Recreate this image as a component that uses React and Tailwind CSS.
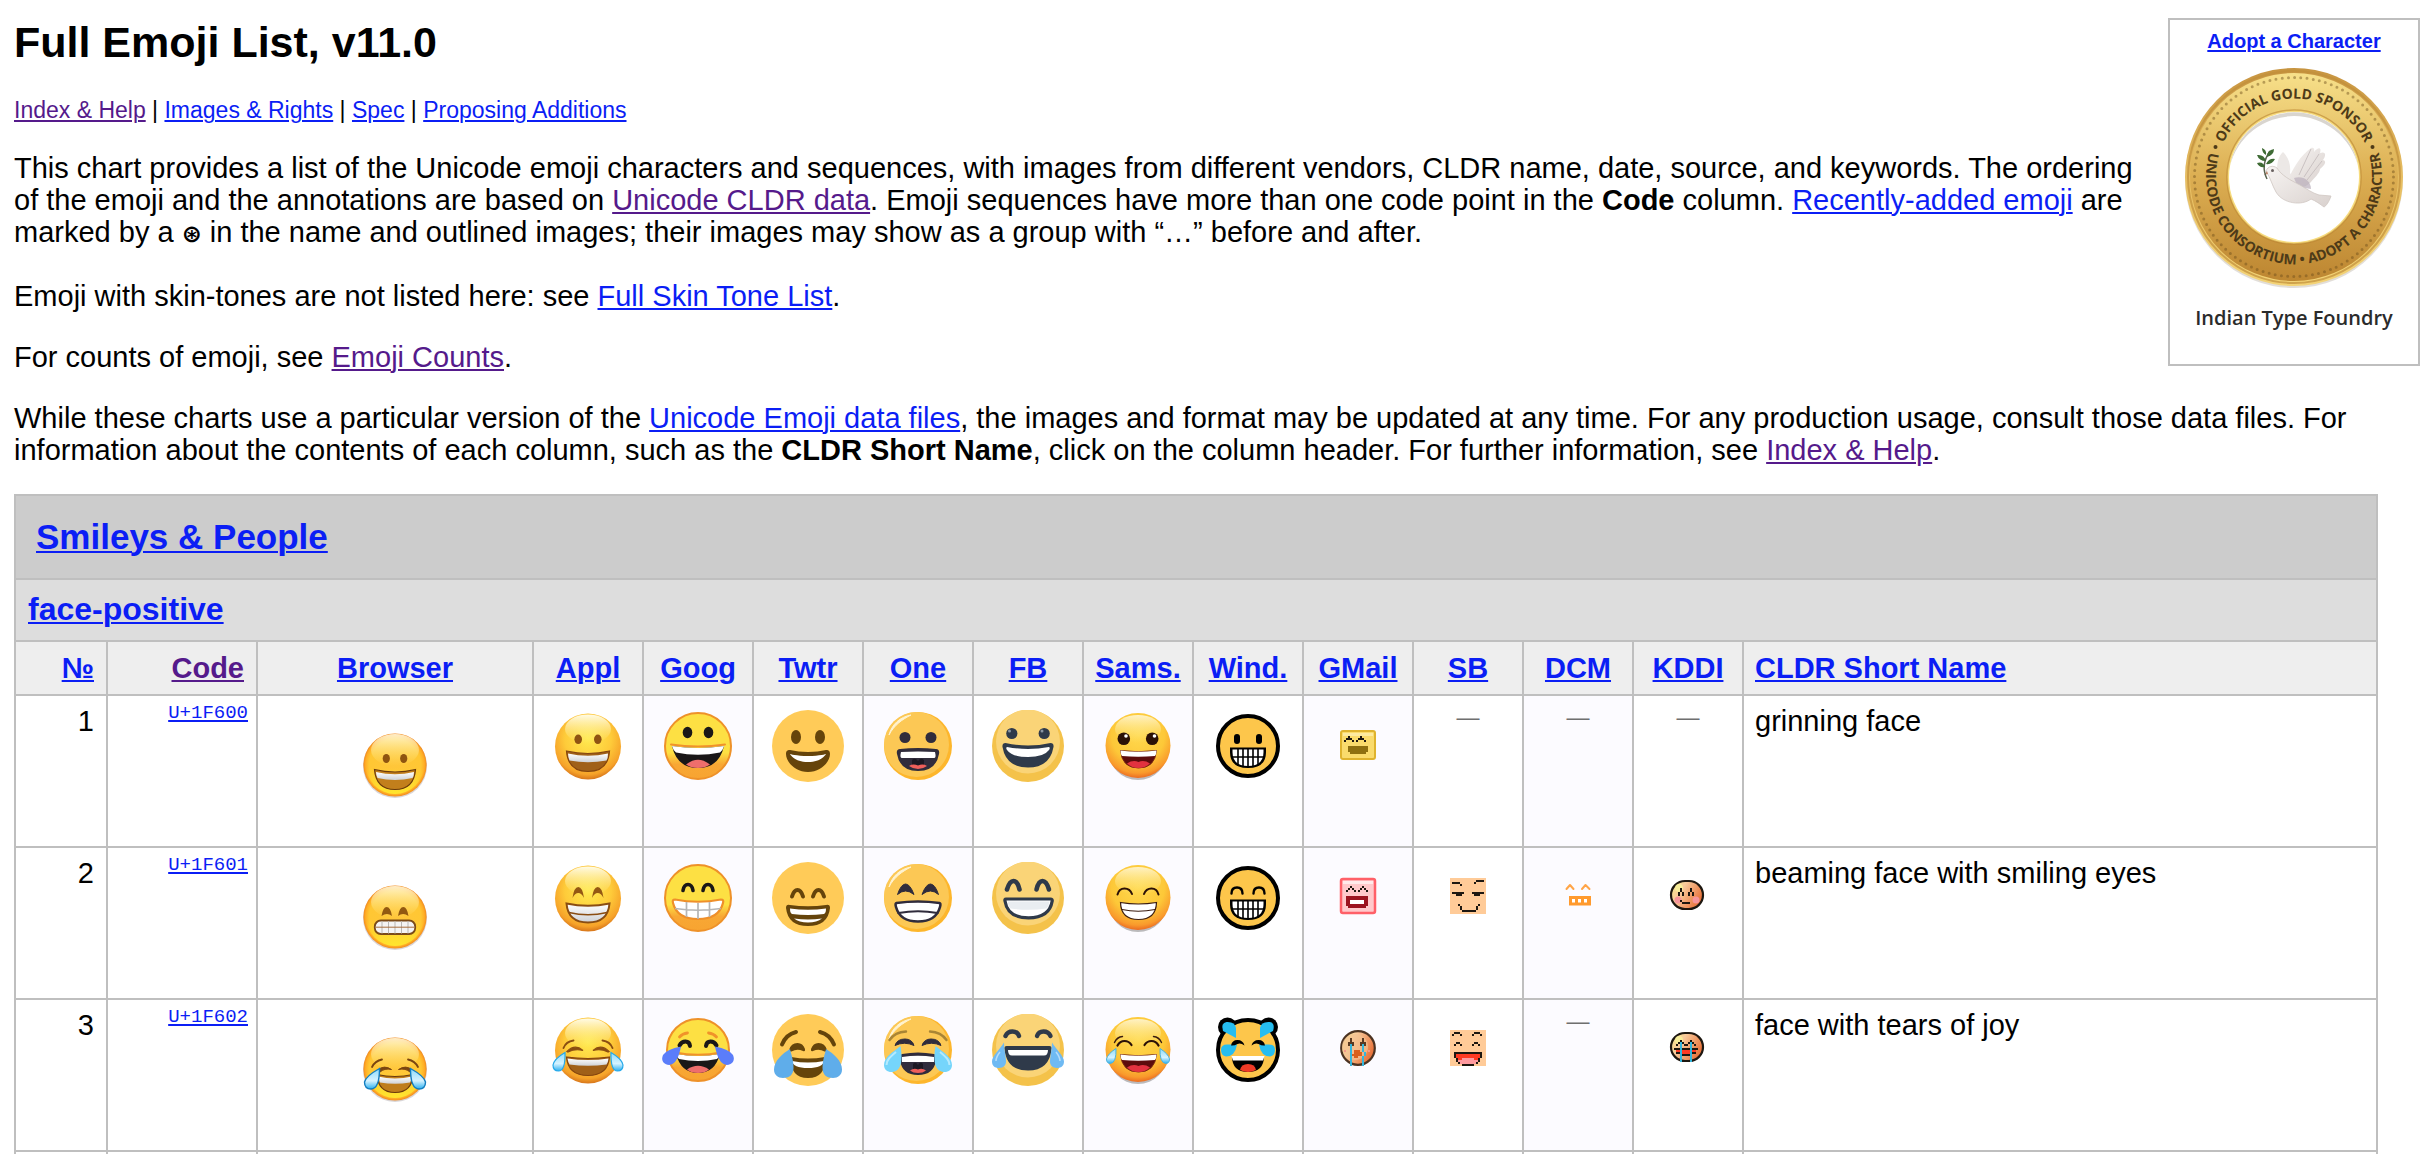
import React from "react";

const BLUE = "text-[#0b1ef5] underline decoration-2 underline-offset-2";
const VISITED = "text-[#551a8b] underline decoration-2 underline-offset-2";

function Link({ visited = false, children }) {
  return (
    <a href="#" className={visited ? VISITED : BLUE}>
      {children}
    </a>
  );
}

/* Shared gradients for the glossy faces */
function Gradients() {
  return (
    <svg width="0" height="0" className="absolute" aria-hidden="true">
      <defs>
        <radialGradient id="apple" cx="50%" cy="38%" r="64%">
          <stop offset="0" stopColor="#ffea50" />
          <stop offset="0.55" stopColor="#fecb3a" />
          <stop offset="0.85" stopColor="#f6a229" />
          <stop offset="1" stopColor="#cf6a17" />
        </radialGradient>
        <linearGradient id="gloss" x1="0" y1="0" x2="0" y2="1">
          <stop offset="0" stopColor="#fffef0" stopOpacity="0.95" />
          <stop offset="1" stopColor="#fff08a" stopOpacity="0" />
        </linearGradient>
        <radialGradient id="browser" cx="50%" cy="50%" r="50%">
          <stop offset="0" stopColor="#ffc63a" />
          <stop offset="0.82" stopColor="#ffc733" />
          <stop offset="0.93" stopColor="#ffae26" />
          <stop offset="1" stopColor="#f28a1e" />
        </radialGradient>
        <linearGradient id="browserLow" x1="0" y1="0" x2="0" y2="1">
          <stop offset="0.55" stopColor="#ffe62e" stopOpacity="0" />
          <stop offset="1" stopColor="#ffe62e" />
        </linearGradient>
        <linearGradient id="goog" x1="0" y1="0" x2="0" y2="1">
          <stop offset="0.6" stopColor="#fde043" />
          <stop offset="0.78" stopColor="#f8a734" />
          <stop offset="1" stopColor="#f7a431" />
        </linearGradient>
        <radialGradient id="sams" cx="50%" cy="34%" r="68%">
          <stop offset="0" stopColor="#ffd84e" />
          <stop offset="0.6" stopColor="#fdc838" />
          <stop offset="0.86" stopColor="#f99a2c" />
          <stop offset="1" stopColor="#e85f1e" />
        </radialGradient>
        <linearGradient id="teeth" x1="0" y1="0" x2="0" y2="1">
          <stop offset="0" stopColor="#ffffff" />
          <stop offset="1" stopColor="#cfd2d6" />
        </linearGradient>
        <linearGradient id="tear" x1="0" y1="0" x2="0" y2="1">
          <stop offset="0" stopColor="#8ddcfb" />
          <stop offset="0.6" stopColor="#d5f2ff" />
          <stop offset="1" stopColor="#2bb0f0" />
        </linearGradient>
        <linearGradient id="skin" x1="0" y1="0" x2="1" y2="0.5">
          <stop offset="0" stopColor="#f6ef8c" />
          <stop offset="0.4" stopColor="#f8c99a" />
          <stop offset="1" stopColor="#e8743c" />
        </linearGradient>
        <linearGradient id="gold" x1="0" y1="0" x2="0" y2="1">
          <stop offset="0" stopColor="#f7e08a" />
          <stop offset="0.5" stopColor="#dcae52" />
          <stop offset="1" stopColor="#bd8631" />
        </linearGradient>
        <linearGradient id="goldRim" x1="0" y1="0" x2="0" y2="1">
          <stop offset="0" stopColor="#c79440" />
          <stop offset="0.5" stopColor="#e7be62" />
          <stop offset="1" stopColor="#f3d376" />
        </linearGradient>
        <linearGradient id="dove" x1="0" y1="0" x2="1" y2="1">
          <stop offset="0" stopColor="#f7f4f2" />
          <stop offset="1" stopColor="#d9d1ce" />
        </linearGradient>
      </defs>
    </svg>
  );
}

function Icon({ label, children }) {
  return (
    <svg width="72" height="72" viewBox="0 0 72 72" role="img" aria-label={label} className="mx-auto block shrink-0">
      {children}
    </svg>
  );
}

/* Draws its children twice, the second time mirrored about the face's axis */
function Mirror({ children }) {
  return (
    <>
      {children}
      <g transform="matrix(-1 0 0 1 72 0)">{children}</g>
    </>
  );
}

function Arc({ d, color, w }) {
  return <path d={d} fill="none" stroke={color} strokeWidth={w} strokeLinecap="round" strokeLinejoin="round" />;
}

/* ---------- face bases ---------- */
function BrowserBase() {
  return (
    <>
      <circle cx="36" cy="37" r="32" fill="#c9c4c8" opacity="0.7" />
      <circle cx="36" cy="36" r="31.6" fill="url(#browser)" />
      <circle cx="36" cy="36" r="29" fill="url(#browserLow)" />
      <ellipse cx="36" cy="21" rx="24" ry="16" fill="url(#gloss)" opacity="0.85" />
    </>
  );
}
function AppleBase() {
  return (
    <>
      <circle cx="36" cy="36.5" r="33" fill="url(#apple)" />
      <ellipse cx="36" cy="19" rx="23" ry="14.5" fill="url(#gloss)" />
    </>
  );
}
function GoogBase({ r = 33 }) {
  return <circle cx="36" cy="36" r={r} fill="url(#goog)" stroke="#ee9129" strokeWidth="2" />;
}
function TwtrBase() {
  return <circle cx="36" cy="36" r="36" fill="#ffcb58" />;
}
function OneBase() {
  return (
    <>
      <circle cx="36" cy="36" r="34" fill="#fdb62c" />
      <ellipse cx="34.5" cy="34.5" rx="32.5" ry="32.5" fill="#fcc855" />
      <path d="M7 25C10 14 18 7 29 5C21 9 12 15 7 25Z" fill="#fff3d0" stroke="#fff3d0" strokeWidth="1" />
    </>
  );
}
function FbBase() {
  return (
    <>
      <circle cx="36" cy="36" r="36" fill="#f4c24a" />
      <circle cx="36" cy="31.5" r="32" fill="#fad477" />
    </>
  );
}
function SamsBase() {
  return (
    <>
      <ellipse cx="36" cy="39" rx="30" ry="31" fill="#8f8f8f" opacity="0.6" />
      <circle cx="36" cy="35.5" r="32.5" fill="url(#sams)" />
      <ellipse cx="36" cy="19" rx="23" ry="14" fill="url(#gloss)" opacity="0.8" />
    </>
  );
}
function WindBase() {
  return <circle cx="36" cy="36" r="30" fill="#fdc64b" stroke="#000" strokeWidth="4" />;
}

/* ---------- grinning ---------- */
function BrowserGrin() {
  return (
    <Icon label="grinning face">
      <BrowserBase />
      <Mirror>
        <ellipse cx="27.3" cy="29.5" rx="3.6" ry="4.6" fill="#8f5410" />
      </Mirror>
      <path d="M15.5 40.5Q36 45.5 56.5 40.5Q55 60.5 36 60.5Q17 60.5 15.5 40.5Z" fill="#c27f1c" stroke="#6b3a0c" strokeWidth="1.2" />
      <path d="M17 43Q36 47.5 55 43Q55 47 53.5 49Q36 53 18.5 49Q17 46 17 43Z" fill="url(#teeth)" />
    </Icon>
  );
}
function AppleGrin() {
  return (
    <Icon label="grinning face">
      <AppleBase />
      <Mirror>
        <ellipse cx="26.2" cy="29.3" rx="3.8" ry="4.8" fill="#8f5313" />
      </Mirror>
      <path d="M14.5 41Q36 46 57.5 41Q56 61.5 36 61.5Q16 61.5 14.5 41Z" fill="#a06018" stroke="#84440e" strokeWidth="1.2" />
      <path d="M16 43.5Q36 48 56 43.5Q56 48 54.5 50.5Q36 54 17.5 50.5Q16 47 16 43.5Z" fill="url(#teeth)" />
    </Icon>
  );
}
function GoogMouth() {
  return (
    <>
      <path d="M10 36Q36 40 62 36Q57 58 36 58Q15 58 10 36Z" fill="#1a1717" />
      <path d="M10 36Q36 40 62 36Q61 40 58 42.5Q36 47 14 42.5Q11 40 10 36Z" fill="#fff" />
      <path d="M24 54.5Q36 45 48 54.5Q43 58 36 58Q29 58 24 54.5Z" fill="#ee6e6c" />
      <Arc d="M9 34.5Q36 38.5 63 34.5" color="#f0922a" w="2" />
    </>
  );
}
function GoogGrin() {
  return (
    <Icon label="grinning face">
      <GoogBase />
      <Mirror>
        <ellipse cx="25.5" cy="22.5" rx="4.8" ry="5.7" fill="#1a1717" />
      </Mirror>
      <GoogMouth />
    </Icon>
  );
}
function TwtrGrin() {
  return (
    <Icon label="grinning face">
      <TwtrBase />
      <g transform="scale(2)">
        <ellipse cx="12" cy="13.5" rx="2.5" ry="3.5" fill="#65440b" />
        <ellipse cx="24" cy="13.5" rx="2.5" ry="3.5" fill="#65440b" />
        <path d="M18 21c-3.623 0-6.027-.422-9-1-.679-.131-2 0-2 2 0 4 4.595 9 11 9 6.404 0 11-5 11-9 0-2-1.321-2.132-2-2-2.973.578-5.377 1-9 1z" fill="#65440b" />
        <path d="M9 22s3 1 9 1 9-1 9-1-2 4-9 4-9-4-9-4z" fill="#fff" />
      </g>
    </Icon>
  );
}
function OneGrin() {
  return (
    <Icon label="grinning face">
      <OneBase />
      <Mirror>
        <circle cx="23" cy="27.5" r="5.5" fill="#302c3c" />
      </Mirror>
      <path d="M18 39Q36 37 54 39Q58 39.5 57 44Q54 61 36 61Q18 61 15 44Q14 39.5 18 39Z" fill="#302c3c" />
      <path d="M19 42Q36 41 53 42Q54.5 48 52 48H20Q17.5 48 19 42Z" fill="#fff" />
      <path d="M30 56V50Q33 47 36 51Q39 47 42 50V56Z" fill="#1b1823" />
      <path d="M27 56Q31 53.5 36 55.5Q41 53.5 45 56Q41 59 36 59Q31 59 27 56Z" fill="#ee5f5b" />
    </Icon>
  );
}
function FbGrin() {
  return (
    <Icon label="grinning face">
      <FbBase />
      <Mirror>
        <circle cx="19.8" cy="23.5" r="5.6" fill="#2f3a4a" />
      </Mirror>
      <circle cx="17.5" cy="21" r="1.5" fill="#8b96a4" />
      <circle cx="50" cy="21" r="1.5" fill="#8b96a4" />
      <path d="M13.5 33Q36 38 58.5 33Q62 33 61.5 37Q58 57.5 36 57.5Q14 57.5 10.5 37Q10 33 13.5 33Z" fill="#2f3a4a" />
      <path d="M15 37Q36 41 57 37Q58.5 37.5 57 40Q52 47 36 47Q20 47 15 40Q13.5 37.5 15 37Z" fill="#fff" />
    </Icon>
  );
}
function SamsMouth() {
  return (
    <>
      <path d="M18.5 40.5Q36 43 54.5 40.5Q53 58 36.5 58Q20 58 18.5 40.5Z" fill="#5c0c0c" stroke="#7b2a10" strokeWidth="1" />
      <path d="M18.5 40.5Q36 43 54.5 40.5Q54.5 44 53 46Q36 47.5 20 46Q18.5 44 18.5 40.5Z" fill="#fff" />
      <path d="M25 53.5Q31 49.5 36.5 52Q42 49.5 48 53.5Q43 58 36.5 58Q30 58 25 53.5Z" fill="#e2323f" />
    </>
  );
}
function SamsGrin() {
  return (
    <Icon label="grinning face">
      <SamsBase />
      <Mirror>
        <circle cx="21.8" cy="28.7" r="6.3" fill="#2b1107" />
      </Mirror>
      <circle cx="24" cy="26" r="1.8" fill="#fff" />
      <circle cx="52.5" cy="26" r="1.8" fill="#fff" />
      <SamsMouth />
    </Icon>
  );
}
function WindTeeth() {
  return (
    <>
      <path d="M18 37.5H54V42Q54 58 36 58Q18 58 18 42Z" fill="#000" />
      <path d="M20.5 39.5H51.5V42Q51.5 56 36 56Q20.5 56 20.5 42Z" fill="#fff" />
      <path d="M26 38V56M31 38V57M36 38V57M41 38V57M46 38V56M19 47H53" stroke="#000" strokeWidth="1.6" />
    </>
  );
}
function WindGrin() {
  return (
    <Icon label="grinning face">
      <WindBase />
      <Mirror>
        <rect x="22" y="24" width="6" height="10" rx="3" />
      </Mirror>
      <WindTeeth />
    </Icon>
  );
}

/* ---------- beaming ---------- */
function BrowserBeam() {
  return (
    <Icon label="beaming face with smiling eyes">
      <BrowserBase />
      <Mirror>
        <path d="M22.5 35Q24 26 27.7 26Q31.5 26 33 35Q28 31 22.5 35Z" fill="#925911" />
      </Mirror>
      <rect x="15.8" y="39.5" width="40.4" height="13.5" rx="6" fill="#f4f4f4" stroke="#7a4a18" strokeWidth="1.8" />
      <path d="M23 40V52.5M29.5 40V52.5M36 40V52.5M42.5 40V52.5M49 40V52.5" stroke="#b9b6b2" strokeWidth="1" />
      <path d="M17 46.2H55" stroke="#a96f3f" strokeWidth="1" />
    </Icon>
  );
}
function AppleBeam() {
  return (
    <Icon label="beaming face with smiling eyes">
      <AppleBase />
      <Mirror>
        <path d="M20.5 36Q22 25 26.3 25Q30.5 25 32 36Q29.5 31 26.3 31Q23 31 20.5 36Z" fill="#945813" />
      </Mirror>
      <path d="M14.5 41.5Q36 46 57.5 41.5Q56 60.5 36 60.5Q16 60.5 14.5 41.5Z" fill="url(#teeth)" stroke="#8a4d12" strokeWidth="2" />
      <Arc d="M17 50.5Q36 55 55 50.5" color="#8a4d12" w="1.6" />
    </Icon>
  );
}
function GoogBeam() {
  return (
    <Icon label="beaming face with smiling eyes">
      <GoogBase />
      <Mirror>
        <Arc d="M21 28.5Q22 22.5 26 22.5Q30 22.5 31 28.5" color="#1a1717" w="3.6" />
      </Mirror>
      <path d="M13 37.5Q36 42 59 37.5Q62 37.5 61 41Q57 57 36 57Q15 57 11 41Q10 37.5 13 37.5Z" fill="#fff" stroke="#ef8f2a" strokeWidth="2.2" />
      <path d="M24.5 40V55M36 41V57M47.5 40V55M13 46.5Q36 50 59 46.5" fill="none" stroke="#b5b5b5" strokeWidth="1.7" />
    </Icon>
  );
}
function TwtrBeam() {
  return (
    <Icon label="beaming face with smiling eyes">
      <TwtrBase />
      <Mirror>
        <Arc d="M20 34.5Q22 28 25.5 28Q29 28 31 34.5" color="#65440b" w="4" />
      </Mirror>
      <path d="M18 43Q36 45.5 54 43Q58 42 58 46Q56 64 36 64Q16 64 14 46Q14 42 18 43Z" fill="#65440b" />
      <path d="M18 46.5Q36 49 54 46.5Q54 51 52 52Q36 54 20 52Q18 51 18 46.5Z" fill="#fff" />
      <path d="M22 56.5Q36 58.5 50 56.5Q45 60.5 36 60.5Q27 60.5 22 56.5Z" fill="#fff" />
    </Icon>
  );
}
function OneBeam() {
  return (
    <Icon label="beaming face with smiling eyes">
      <OneBase />
      <Mirror>
        <path d="M15.5 32.5Q19 22 23.6 22Q28 22 32 32.5Q23.5 25.5 15.5 32.5Z" fill="#302c3c" stroke="#302c3c" strokeWidth="1" />
      </Mirror>
      <path d="M14.5 41Q36 38 57.5 41Q59 41.5 58 45Q54 59.5 36 59.5Q18 59.5 14 45Q13 41.5 14.5 41Z" fill="#fff" stroke="#302c3c" strokeWidth="2.6" />
      <Arc d="M16.5 51Q36 47.5 55.5 51" color="#302c3c" w="2.2" />
    </Icon>
  );
}
function FbBeam() {
  return (
    <Icon label="beaming face with smiling eyes">
      <FbBase />
      <Mirror>
        <Arc d="M15 27.5Q17.5 19 21.5 19Q25.5 19 27.5 27.5" color="#2f3a4a" w="4.6" />
      </Mirror>
      <path d="M14 37H58.5Q60.5 37 60.2 39Q57.5 55.8 36.5 55.8Q15.5 55.8 13 39Q12.5 37 14 37Z" fill="#fff" stroke="#2f3a4a" strokeWidth="3.2" />
      <path d="M15.5 39.5H57.5Q57 44 54.5 46.5Q36 49 18.5 46.5Q16 44 15.5 39.5Z" fill="#e9edf1" />
    </Icon>
  );
}
function SamsBeam() {
  return (
    <Icon label="beaming face with smiling eyes">
      <SamsBase />
      <Mirror>
        <Arc d="M15.5 32.5Q17 26.5 22.5 26.5Q28 26.5 30 32" color="#2b1107" w="2" />
      </Mirror>
      <path d="M18.5 40.5Q36 43.5 54.5 40.5Q54 57.5 36.5 57.5Q19 57.5 18.5 40.5Z" fill="#fff" stroke="#3a1c10" strokeWidth="1.2" />
      <Arc d="M20 47.5Q36 51 53 47.5" color="#3a1c10" w="1.2" />
    </Icon>
  );
}
function WindBeam() {
  return (
    <Icon label="beaming face with smiling eyes">
      <WindBase />
      <Mirror>
        <Arc d="M19.5 31.5Q19.5 25.5 25 25.5Q30.5 25.5 30.5 31.5" color="#000" w="2.4" />
      </Mirror>
      <WindTeeth />
    </Icon>
  );
}

/* ---------- tears of joy ---------- */
function BrowserJoy() {
  return (
    <Icon label="face with tears of joy">
      <BrowserBase />
      <Mirror>
        <Arc d="M13 34Q16 28 23 26.5" color="#7b4610" w="1.8" />
        <path d="M19 37Q25 31.5 32.5 36.5Q25.5 35 21 39Z" fill="#7b4610" stroke="#7b4610" strokeWidth="1" />
      </Mirror>
      <path d="M18 41.5Q36 45.5 54 41.5Q53 59.5 36 59.5Q19 59.5 18 41.5Z" fill="#bf7d1c" stroke="#6b3a0c" strokeWidth="1.2" />
      <path d="M19 43.5Q36 47.5 53 43.5Q52 48 51 49.5Q36 52 21 49.5Z" fill="url(#teeth)" />
      <Mirror>
        <path d="M20.5 35.5Q7 43 5.5 49Q5.5 56 12 56Q20.5 56 20.5 35.5Z" fill="url(#tear)" stroke="#127dc0" strokeWidth="1.4" />
      </Mirror>
    </Icon>
  );
}
function AppleJoy() {
  return (
    <Icon label="face with tears of joy">
      <AppleBase />
      <Mirror>
        <Arc d="M11.5 34Q14 27.5 21.5 26.5" color="#8a4d12" w="1.9" />
        <path d="M15 37.5Q23 29.5 31 36.5Q23 34.5 16 38Z" fill="#8a4d12" stroke="#8a4d12" strokeWidth="1.2" />
      </Mirror>
      <path d="M14.5 43Q36 46 57.5 43Q56 61.5 36 61.5Q16 61.5 14.5 43Z" fill="#a06018" stroke="#84440e" strokeWidth="1.2" />
      <path d="M15.5 44.5Q36 47.5 56.5 44.5Q56 49 54.5 50.5Q36 53 17.5 50.5Q16 48 15.5 44.5Z" fill="url(#teeth)" />
      <Mirror>
        <path d="M13 38.5Q2 45 1 51Q1 57 6.5 57Q13.5 57 13 38.5Z" fill="url(#tear)" stroke="#25a9ea" strokeWidth="1.2" />
      </Mirror>
    </Icon>
  );
}
function GoogJoy() {
  return (
    <Icon label="face with tears of joy">
      <GoogBase r={31} />
      <Mirror>
        <Arc d="M17.5 23Q20.5 19.5 25.5 19" color="#f0922a" w="2.8" />
        <Arc d="M17.5 31.5Q19.5 27.5 23.5 27.5Q27.5 27.5 28 32" color="#1a1717" w="4" />
      </Mirror>
      <path d="M14 40Q36 44 58 40Q53 59 36 59Q19 59 14 40Z" fill="#1a1717" />
      <path d="M14 40Q36 44 58 40Q57 43.5 55 45Q36 49 17 45Q15 43 14 40Z" fill="#fff" />
      <path d="M25 55.5Q36 48 47 55.5Q43 59 36 59Q29 59 25 55.5Z" fill="#ee6e6c" />
      <Arc d="M13 38.5Q36 43 59 38.5" color="#f0922a" w="2" />
      <Mirror>
        <path d="M19 32.5Q5 35 1 41Q-1.5 47 3.5 50Q9 52.5 13 48Q17 43 19 32.5Z" fill="#5b7dfa" />
      </Mirror>
    </Icon>
  );
}
function TwtrJoy() {
  return (
    <Icon label="face with tears of joy">
      <TwtrBase />
      <Mirror>
        <Arc d="M10 30.5Q14 20.5 24 18" color="#65440b" w="4" />
        <path d="M17 36Q19 29 25.5 29Q31 29 33 35Q33.5 38 31 37Q25 34.5 19.5 37.5Q17 38 17 36Z" fill="#65440b" />
      </Mirror>
      <path d="M19 43Q36 46 53 43Q54 64 36 64Q18 64 19 43Z" fill="#65440b" />
      <path d="M20 47Q36 50 52 47Q51 54 36 54Q21 54 20 47Z" fill="#fff" />
      <Mirror>
        <path d="M18 35C10 40 2 47 2 55.5C2 61 6 64 11 64C17 64 21.5 61 21.5 54C21.5 46 19 40 18 35Z" fill="#5fadea" />
      </Mirror>
    </Icon>
  );
}
function OneJoy() {
  return (
    <Icon label="face with tears of joy">
      <OneBase />
      <Mirror>
        <Arc d="M7.5 26Q13 18 24 17.5" color="#a98535" w="2.4" />
        <path d="M13 31.5Q15 25 23 25Q30 25 32 31.5Q22.5 27 13 31.5Z" fill="#302c3c" stroke="#302c3c" strokeWidth="1" />
      </Mirror>
      <path d="M20 40Q36 37 52 40Q55 41 54 46Q52 61 36 61Q20 61 18 46Q17 41 20 40Z" fill="#302c3c" />
      <path d="M20 43Q36 40.5 52 43V48H20Z" fill="#fff" />
      <path d="M31 57V50Q33.5 47 36 51Q38.5 47 41 50V57Z" fill="#1b1823" />
      <path d="M28 56.5Q32 53.5 36 55.5Q40 53.5 44 56.5Q41 59 36 59Q31 59 28 56.5Z" fill="#ee5f5b" />
      <Mirror>
        <path d="M18.5 32C11 38 2 43 2 51C2 56 6 58.5 10.5 58C18 57 21.5 50 18.5 32Z" fill="#75d5fb" />
        <path d="M14 38C8 43 4.5 46 4.5 51" fill="none" stroke="#b6eafd" strokeWidth="2" />
      </Mirror>
    </Icon>
  );
}
function FbJoy() {
  return (
    <Icon label="face with tears of joy">
      <FbBase />
      <Mirror>
        <Arc d="M13.5 22Q15.5 17.5 20.5 17.5Q25.5 17.5 27 22" color="#2f3a4a" w="4.4" />
      </Mirror>
      <path d="M14.5 32H57.5Q60 32 59.5 35Q57.5 56.5 36 56.5Q14.5 56.5 12.5 35Q12 32 14.5 32Z" fill="#2f3a4a" />
      <path d="M16 36H56Q56 41.5 52 41.5H20Q16 41.5 16 36Z" fill="#fff" />
      <Mirror>
        <path d="M12 28.5C8 35 0 42 0 47.5C0 52 3 54 7 54C11.5 54 14.5 51 14 46.5C13.5 40 12 35 12 28.5Z" fill="#6fbaf3" />
        <path d="M8 38Q4 43 4 47" fill="none" stroke="#b4dcfa" strokeWidth="1.6" />
      </Mirror>
    </Icon>
  );
}
function SamsJoy() {
  return (
    <Icon label="face with tears of joy">
      <SamsBase />
      <Mirror>
        <Arc d="M12.5 28.5Q15 23 20.5 22.5" color="#3a1c10" w="1.4" />
        <Arc d="M15.5 31.5Q18 27 22.5 27Q27 27 29.5 31" color="#2b1107" w="2.2" />
      </Mirror>
      <SamsMouth />
      <Mirror>
        <path d="M14 34.5Q5.5 40 4.5 45Q4.5 49.5 8.5 49.5Q14.5 48.5 14 34.5Z" fill="url(#tear)" stroke="#4bb2dc" strokeWidth="1" />
      </Mirror>
    </Icon>
  );
}
function WindJoy() {
  return (
    <Icon label="face with tears of joy">
      <Mirror>
        <circle cx="15.5" cy="13" r="9.5" fill="#000" />
      </Mirror>
      <WindBase />
      <Mirror>
        <path d="M24 24L11 17Q8.5 9 14.5 8Q23 7.5 24 14Z" fill="#26bdf0" />
        <path d="M25 30.5Q23 42.5 14 42.5Q9 41.5 9 36Q9 30.5 15 30.5Z" fill="#26bdf0" />
        <path d="M19 31.5Q20 26 25.5 26Q31 26 32.5 31.5Q28.5 28.5 25.5 30Q22 32 19 31.5Z" />
      </Mirror>
      <path d="M20 42H52Q52 58 36 58Q20 58 20 42Z" />
      <path d="M19.5 42H52.5L51 46.5H21Z" fill="#fff" />
      <path d="M28 56Q29 50 36 50Q43 50 44 56Q40 58 36 58Q32 58 28 56Z" fill="#f03a26" />
    </Icon>
  );
}

/* ---------- small pixel faces ---------- */
const PALETTE = {
  k: "#1d1710",
  o: "#8f7010",
  r: "#9c1420",
  w: "#ffffff",
  R: "#ff3a22",
  P: "#ff9a9f",
  b: "#35b6dc",
  d: "#5b3a22",
  c: "#f59a8a",
  t: "#d9601c",
};

function Pixels({ rows, x = 18, y = 16 }) {
  return (
    <g shapeRendering="crispEdges">
      {rows.flatMap((row, r) =>
        [...row].map((ch, c) =>
          PALETTE[ch] ? <rect key={`${r}-${c}`} x={x + c * 2} y={y + r * 2} width="2" height="2" fill={PALETTE[ch]} /> : null,
        ),
      )}
    </g>
  );
}

function GmailGrin() {
  return (
    <Icon label="grinning face">
      <rect x="19" y="21" width="34" height="28" rx="2" fill="#fadb6c" stroke="#dfb32e" strokeWidth="2" />
      <rect x="21" y="23" width="30" height="3" fill="#fdeaa0" />
      <Pixels
        y={20}
        rows={["", "", "", "....k.....k", "...kkk...kkk", "..k...k.k...k", "", "", "....oooooooooo", "....oooooooooo", "....oooooooooo", ".....oooooooo"]}
      />
    </Icon>
  );
}
function GmailBeam() {
  return (
    <Icon label="beaming face with smiling eyes">
      <rect x="19" y="17" width="34" height="34" rx="2" fill="#ffc9cb" stroke="#ff6068" strokeWidth="2.5" />
      <rect x="21" y="19" width="30" height="3" fill="#ffeaea" />
      <Pixels
        rows={["", "", "", "", ".....k.....k", "....k.k...k.k", "...k...k.k...k", "", "", "...rrrrrrrrrrr", "...rrrrrrrrrrr", "...rrwwwwwwwrr", "...rrwwwwwwwrr", "...rrrrrrrrrrr", "....rrrrrrrrr"]}
      />
    </Icon>
  );
}
function GmailJoy() {
  return (
    <Icon label="face with tears of joy">
      <circle cx="36" cy="34" r="16.8" fill="url(#skin)" stroke="#4c3322" strokeWidth="2.2" />
      <circle cx="33" cy="33" r="13" fill="#f3c292" opacity="0.7" />
      <Pixels
        rows={["", "", "", "", ".....d.....d", ".....d.....d", "....ddd...ddd", "....dbd...dbd", ".....b.....b", ".....b.....b", "..c..b.ttt.b..c", ".....b.tttt.b", ".....bttttt.b", ".....b.tt..b", ".....b.....b", ".....b.....b", ".....b.....b", ".....b.....b"]}
      />
    </Icon>
  );
}
function SbBeam() {
  return (
    <Icon label="beaming face with smiling eyes">
      <rect x="18" y="16" width="36" height="36" fill="#ffcb98" />
      <Pixels
        rows={["", ".............kkkk", ".kkkk.......k", ".....k", "", "", "", ".kkkkkk....kkkkkk", "...kkk......kkk", "", "", "", "", "....k.........k", ".....k.......k", ".....k.......k", "......kkkkkkk"]}
      />
    </Icon>
  );
}
function SbJoy() {
  return (
    <Icon label="face with tears of joy">
      <rect x="18" y="16" width="36" height="36" fill="#ffcb98" />
      <Pixels
        rows={["", "..kkk.......kkk", ".k...k.....k...k", "", "", "", "...kk.......kk", "..k..k.....k..k", "", "", "", "..kkkkkkkkkkkkkk", "..kRRRRRRRRRRRRk", "..kRRRRRRRRRRRRk", "...kRRPPPPPPRRk", "...kPPPPPPPPPPk", "....kPPPPPPPPk", "......kkkkkk"]}
      />
    </Icon>
  );
}
function DcmBeam() {
  return (
    <Icon label="beaming face with smiling eyes">
      <Arc d="M24.5 27L28 23L31.5 27M40 27L43.5 23L47.5 27" color="#ffa548" w="2" />
      <rect x="27" y="34" width="22" height="9.5" fill="#ff9a2e" />
      <path d="M30 37h3v3.500h-3zM36 37h3v3.500h-3zM42 37h3v3.500h-3z" fill="#fff" />
    </Icon>
  );
}
function KddiBase() {
  return (
    <>
      <rect x="19" y="19" width="32" height="28" rx="14" fill="url(#skin)" stroke="#1d1710" strokeWidth="2.2" />
      <circle cx="27" cy="26" r="4" fill="#f8f39a" opacity="0.8" />
    </>
  );
}
function KddiBeam() {
  return (
    <Icon label="beaming face with smiling eyes">
      <KddiBase />
      <circle cx="26" cy="38" r="3.5" fill="#f7959a" />
      <circle cx="44" cy="38" r="3.5" fill="#f7959a" />
      <Pixels y={18} rows={["", "", "", "", ".....k....k", ".....k....k", "....k.k..k.k", "....k.k..k.k", "", "", ".....k", "......kkkk", ""]} />
    </Icon>
  );
}
function KddiJoy() {
  return (
    <Icon label="face with tears of joy">
      <KddiBase />
      <Pixels
        y={18}
        rows={["", "", "", "", ".....k....k", "....kbk..kbk", "...k.b.kk.b.k", ".....b....b", "..kkkbkkkkbkkk", "...RRbRRRRbRR", "...kkbRRRRbkk", ".....bkkkkb", ".....b....b", ".....b....b", ".....b....b"]}
      />
    </Icon>
  );
}

function Missing() {
  return <span className="block text-[23px] leading-[26px] text-[#6f6f6f]">—</span>;
}

/* ---------- page data ---------- */
const COLUMNS = ["Appl", "Goog", "Twtr", "One", "FB", "Sams.", "Wind.", "GMail", "SB", "DCM", "KDDI"];

const ROWS = [
  {
    n: 1,
    code: "U+1F600",
    name: "grinning face",
    browser: BrowserGrin,
    images: [AppleGrin, GoogGrin, TwtrGrin, OneGrin, FbGrin, SamsGrin, WindGrin, GmailGrin, null, null, null],
  },
  {
    n: 2,
    code: "U+1F601",
    name: "beaming face with smiling eyes",
    browser: BrowserBeam,
    images: [AppleBeam, GoogBeam, TwtrBeam, OneBeam, FbBeam, SamsBeam, WindBeam, GmailBeam, SbBeam, DcmBeam, KddiBeam],
  },
  {
    n: 3,
    code: "U+1F602",
    name: "face with tears of joy",
    browser: BrowserJoy,
    images: [AppleJoy, GoogJoy, TwtrJoy, OneJoy, FbJoy, SamsJoy, WindJoy, GmailJoy, SbJoy, null, KddiJoy],
  },
];

function Seal() {
  return (
    <svg width="228" height="228" viewBox="0 0 228 228" role="img" aria-label="Official gold sponsor seal" className="mx-auto block">
      <defs>
        <path id="sealTop" d="M35.5 112A78.5 78.5 0 0 1 192.5 112" />
        <path id="sealBottom" d="M39.8 64A88 88 0 1 0 188.2 64" />
      </defs>
      <circle cx="114" cy="114" r="109" fill="#8a7a68" opacity="0.25" />
      <circle cx="114" cy="112" r="109" fill="url(#goldRim)" />
      <circle cx="114" cy="112" r="106" fill="none" stroke="#c18f3b" strokeWidth="2" opacity="0.7" />
      <circle cx="114" cy="112" r="104" fill="url(#gold)" />
      <circle cx="114" cy="112" r="99.5" fill="none" stroke="#6d4d1b" strokeOpacity="0.45" strokeWidth="3" strokeLinecap="round" strokeDasharray="0 6.25" />
      <circle cx="114" cy="112" r="67" fill="#f7dc7e" />
      <circle cx="114" cy="112" r="67" fill="none" stroke="#b98430" strokeOpacity="0.6" strokeWidth="1.5" />
      <circle cx="114" cy="112" r="65" fill="#fff" />
      <path d="M50 101A65 65 0 0 1 178 101A66 66 0 0 0 50 101Z" fill="#d9d5cf" />
      <g fill="#4d3a18" fontFamily="Open Sans, sans-serif" fontWeight="700" fontSize="14">
        <text textAnchor="middle">
          <textPath href="#sealTop" startOffset="50%">
            OFFICIAL GOLD SPONSOR
          </textPath>
        </text>
        <text textAnchor="middle">
          <textPath href="#sealBottom" startOffset="50%">
            UNICODE CONSORTIUM • ADOPT A CHARACTER
          </textPath>
        </text>
        <circle cx="35.5" cy="82" r="2" />
        <circle cx="192.5" cy="82" r="2" />
      </g>
      <g>
        <path d="M98 113C96 104 97 92 103 87C108 92 111 99 110 108L116 117Z" fill="#ece8e6" />
        <path d="M108 116C112 104 121 90 131 83C133 82 135 83 134 87C138 82 142 82 140 88C145 86 147 89 143 95C147 96 145 100 140 104C140 108 134 113 130 118C124 124 114 124 108 116Z" fill="url(#dove)" />
        <path d="M131 84L119 110M139 89L124 112M142 96L127 115" stroke="#c9c1c1" strokeWidth="1" fill="none" />
        <path d="M114 113C122 110 131 115 131 124L118 122Z" fill="#b9aebb" opacity="0.7" />
        <path d="M86 106C88 101 93 100 97 103C101 110 110 115 120 120C127 124 132 128 139 130L151 131C149 137 146 141 144 142C140 139 136 136 131 134C122 141 103 139 96 127C92 120 91 114 86 106Z" fill="url(#dove)" stroke="#cfc7c2" strokeWidth="0.8" />
        <circle cx="92.5" cy="105.5" r="1.5" fill="#6a6261" />
        <path d="M87 106L84 110L88 109Z" fill="#c08a70" />
        <path d="M87 114C83 106 83 96 90 86" stroke="#5a6350" strokeWidth="1.5" fill="none" />
        <path d="M86 96Q79 96 77 90Q84 89 86 96ZM85 102Q79 103 77 98Q83 96 85 102ZM87 92Q87 85 94 84Q94 90 87 92ZM86 99Q89 93 95 94Q92 100 86 99ZM86 90Q82 88 82 83Q87 85 86 90Z" fill="#3f6b35" />
      </g>
    </svg>
  );
}

function SponsorBox() {
  return (
    <aside className="float-right mt-[18px] mr-[10px] ml-6 flex w-[252px] flex-col items-center border-2 border-[#bfbfbf] pt-2 pb-[34px]">
      <a href="#" className="text-[20px] leading-[26px] font-bold text-[#0b1ef5] underline decoration-2 underline-offset-2">
        Adopt a Character
      </a>
      <div className="mt-[11px]">
        <Seal />
      </div>
      <p className="mt-[13px] font-['Open_Sans',sans-serif] text-[20px] leading-6 font-semibold text-[#2b2b2b]">Indian Type Foundry</p>
    </aside>
  );
}

const CELL = "border-2 border-[#bfbfbf]";

function EmojiRow({ row }) {
  const Browser = row.browser;
  return (
    <tr className="h-[152px] align-top">
      <td className={`${CELL} px-3 pt-[9px] text-right`}>{row.n}</td>
      <td className={`${CELL} px-2 pt-[6px] text-right`}>
        <a
          href="#"
          className="block font-['Courier_New','Liberation_Mono',monospace] text-[19px] leading-[22px] text-[#0b1ef5] underline decoration-2 underline-offset-2"
        >
          {row.code}
        </a>
      </td>
      <td className={`${CELL} pt-[33px]`}>
        <Browser />
      </td>
      {row.images.map((Image, i) => (
        <td key={COLUMNS[i]} className={`${CELL} ${i % 2 ? "bg-[#fcfbff]" : "bg-white"} ${Image ? "pt-[14px]" : "pt-2"} text-center`}>
          {Image ? <Image /> : <Missing />}
        </td>
      ))}
      <td className={`${CELL} px-[11px] pt-[9px]`}>{row.name}</td>
    </tr>
  );
}

export default function App() {
  return (
    <main className="overflow-x-hidden bg-white font-['Liberation_Sans',Arial,sans-serif] text-[29px] leading-8 text-black">
      <Gradients />
      <SponsorBox />
      <div className="pt-[18px] pl-[14px]">
        <h1 className="text-[43px] leading-[48px] font-bold">Full Emoji List, v11.0</h1>
        <nav className="mt-[31px] text-[23px] leading-[26px]">
          <Link visited>Index &amp; Help</Link> | <Link>Images &amp; Rights</Link> | <Link>Spec</Link> | <Link>Proposing Additions</Link>
        </nav>
        <p className="mt-[29px]">
          This chart provides a list of the Unicode emoji characters and sequences, with images from different vendors, CLDR name, date,
          source, and keywords. The ordering of the emoji and the annotations are based on <Link visited>Unicode CLDR data</Link>. Emoji
          sequences have more than one code point in the <b>Code</b> column. <Link>Recently-added emoji</Link> are marked by a{" "}
          <span className="font-['DejaVu_Sans',sans-serif] text-[24px] leading-none font-bold">⊛</span> in the name and outlined images;
          their images may show as a group with “…” before and after.
        </p>
        <p className="mt-8">
          Emoji with skin-tones are not listed here: see <Link>Full Skin Tone List</Link>.
        </p>
        <p className="mt-[29px]">
          For counts of emoji, see <Link visited>Emoji Counts</Link>.
        </p>
        <p className="mt-[29px] mr-[14px]">
          While these charts use a particular version of the <Link>Unicode Emoji data files</Link>, the images and format may be updated at
          any time. For any production usage, consult those data files. For information about the contents of each column, such as the{" "}
          <b>CLDR Short Name</b>, click on the column header. For further information, see <Link visited>Index &amp; Help</Link>.
        </p>
      </div>
      <div className="mt-7 mr-[52px] ml-[14px]">
        <table className="w-full table-fixed border-collapse">
          <colgroup>
            <col className="w-[92px]" />
            <col className="w-[150px]" />
            <col className="w-[276px]" />
            {COLUMNS.map((c) => (
              <col key={c} className="w-[110px]" />
            ))}
            <col />
          </colgroup>
          <thead>
            <tr className="h-[84px]">
              <th colSpan={15} className={`${CELL} bg-[#cccccc] px-5 text-left text-[35px] leading-10`}>
                <Link>Smileys &amp; People</Link>
              </th>
            </tr>
            <tr className="h-[62px]">
              <th colSpan={15} className={`${CELL} bg-[#dddddd] px-3 pb-[2px] text-left text-[32px] leading-9`}>
                <Link>face-positive</Link>
              </th>
            </tr>
            <tr className="h-[54px] bg-[#eeeeee]">
              <th className={`${CELL} px-3 text-right`}>
                <Link>№</Link>
              </th>
              <th className={`${CELL} px-3 text-right`}>
                <Link visited>Code</Link>
              </th>
              <th className={CELL}>
                <Link>Browser</Link>
              </th>
              {COLUMNS.map((c) => (
                <th key={c} className={CELL}>
                  <Link>{c}</Link>
                </th>
              ))}
              <th className={`${CELL} px-[11px] text-left`}>
                <Link>CLDR Short Name</Link>
              </th>
            </tr>
          </thead>
          <tbody>
            {ROWS.map((row) => (
              <EmojiRow key={row.n} row={row} />
            ))}
            <tr className="h-[3px]">
              {Array.from({ length: 15 }, (_, i) => (
                <td key={i} className="border-x-2 border-[#bfbfbf]" />
              ))}
            </tr>
          </tbody>
        </table>
      </div>
    </main>
  );
}
